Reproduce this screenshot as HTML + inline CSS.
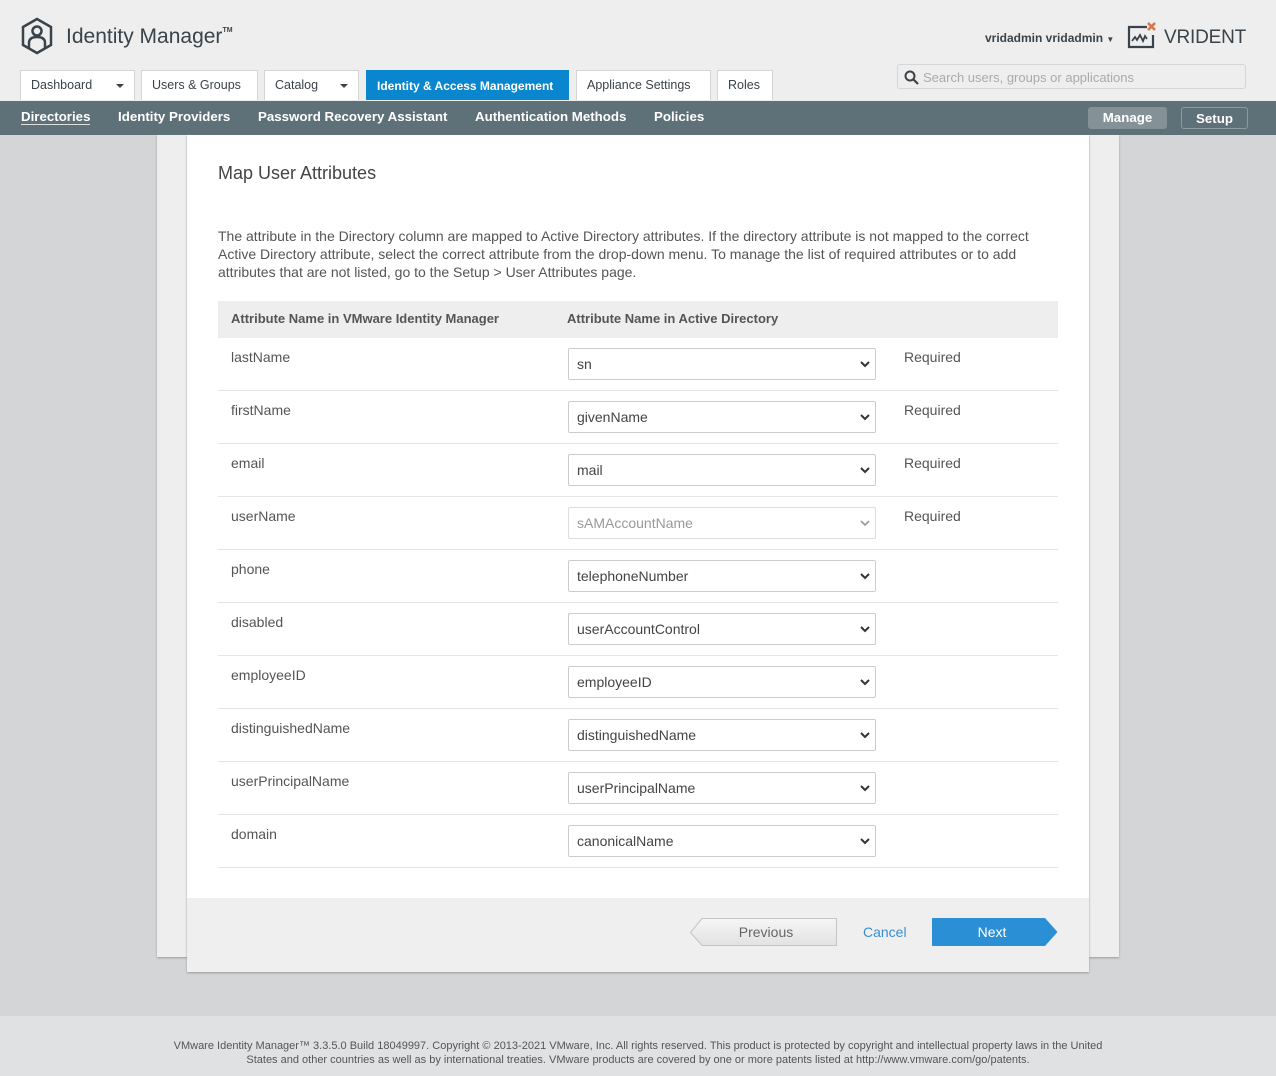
<!DOCTYPE html>
<html><head><meta charset="utf-8"><style>
*{box-sizing:border-box;margin:0;padding:0}
body{width:1276px;height:1076px;background:#d4d5d7;font-family:"Liberation Sans",Arial,sans-serif;position:relative;overflow:hidden;color:#555}
.hdr{position:absolute;left:0;top:0;width:1276px;height:101px;background:#eeeeee}
.logo{position:absolute;left:20px;top:17px}
.title{position:absolute;left:66px;top:25px;font-size:21px;color:#3a434a}
.title sup{font-size:7px;vertical-align:11px;font-weight:bold}
.user{position:absolute;left:985px;top:31px;font-size:12px;font-weight:bold;color:#3a434a}
.vr{position:absolute;left:1164px;top:27px;font-size:19px;color:#3a434a;letter-spacing:-0.2px}
.search{position:absolute;left:897px;top:64px;width:349px;height:25px;border:1px solid #d6d6d6;border-radius:3px;background:#eee}
.search span{position:absolute;left:25px;top:5px;font-size:13px;color:#aaa}
.tab{position:absolute;top:70px;height:30px;background:#fff;border:1px solid #d4d4d4;border-bottom:none;font-size:12.5px;color:#3a434a;padding:7px 0 0 10px;white-space:nowrap}
.tab.a{background:#0a86cf;color:#fff;font-weight:bold;border-color:#0a86cf;font-size:12px;padding-top:8px}
.caret{position:absolute;right:10px;top:13px;border:4px solid transparent;border-top:4px solid #3a434a;border-bottom:none}
.nav{position:absolute;left:0;top:101px;width:1276px;height:34px;background:#5e7078}
.nav a{position:absolute;top:8px;font-size:13.3px;font-weight:bold;color:#fff;text-decoration:none;white-space:nowrap}
.btn{position:absolute;top:6px;height:22px;border-radius:3px;font-size:13.3px;font-weight:bold;color:#fff;text-align:center;padding-top:3px}
.back{position:absolute;left:157px;top:135px;width:962px;height:822px;background:#eeeeee;box-shadow:0 1px 2px #999}
.card{position:absolute;left:187px;top:135px;width:902px;height:837px;background:#fff;box-shadow:0 1px 2px #999}
.card h1{position:absolute;left:31px;top:28px;font-size:18px;font-weight:normal;color:#444}
.desc{position:absolute;left:31px;top:92px;width:830px;font-size:14px;line-height:18px;color:#555}
.th{position:absolute;left:31px;top:166px;width:840px;height:37px;background:#eeeeee;font-size:13px;font-weight:bold;color:#555}
.row{position:absolute;left:31px;width:840px;height:53px;border-bottom:1px solid #e4e4e4;font-size:14px;color:#555}
.row .n{position:absolute;left:13px;top:11px}
.row .r{position:absolute;left:686px;top:11px}
.sel{position:absolute;left:350px;top:10px;width:308px;height:32px;border:1px solid #ccc;border-radius:2px;padding:7px 0 0 8px;color:#444}
.sel.d{color:#999;border-color:#ddd}
.sel svg{position:absolute;right:5px;top:12px}
.foot{position:absolute;left:0;top:763px;width:902px;height:74px;background:#efefef}
.ftr{position:absolute;left:0;top:1016px;width:1276px;height:60px;background:#e0e1e2;font-size:11px;color:#555;text-align:center;padding-top:23px;line-height:14px}
</style></head><body>
<div class="hdr">
<svg class="logo" width="34" height="38" viewBox="0 0 34 38"><path d="M17 2 L31 10 L31 28 L17 36 L3 28 L3 10 Z" fill="none" stroke="#3a434a" stroke-width="2.5"/><circle cx="17" cy="14" r="4.5" fill="none" stroke="#3a434a" stroke-width="2.5"/><path d="M9 31 L9 26 Q9 20 17 20 Q25 20 25 26 L25 31" fill="none" stroke="#3a434a" stroke-width="2.5"/></svg>
<div class="title">Identity Manager<sup>TM</sup></div>
<div class="user">vridadmin vridadmin <span style="font-size:8px">▼</span></div>
<svg style="position:absolute;left:1127px;top:22px" width="30" height="27" viewBox="0 0 30 27"><path d="M20 5 H2 V25 H26 V13" fill="none" stroke="#3a434a" stroke-width="2.2"/><path d="M5 19 L8 15 L10 18 L13 13 L16 19 L18 14 L20 17" fill="none" stroke="#3a434a" stroke-width="1.8"/><path d="M21 1 L28 8 M28 1 L21 8" stroke="#d4764a" stroke-width="2.6"/></svg>
<div class="vr">VRIDENT</div>
<div class="search"><svg style="position:absolute;left:6px;top:5px" width="15" height="15" viewBox="0 0 15 15"><circle cx="6" cy="6" r="4.5" fill="none" stroke="#3a434a" stroke-width="2"/><path d="M9.5 9.5 L14 14" stroke="#3a434a" stroke-width="2.2"/></svg><span>Search users, groups or applications</span></div>
<div class="tab" style="left:20px;width:115px">Dashboard<i class="caret"></i></div>
<div class="tab" style="left:141px;width:117px">Users &amp; Groups</div>
<div class="tab" style="left:264px;width:95px">Catalog<i class="caret"></i></div>
<div class="tab a" style="left:366px;width:203px">Identity &amp; Access Management</div>
<div class="tab" style="left:576px;width:135px">Appliance Settings</div>
<div class="tab" style="left:717px;width:56px">Roles</div>
</div>
<div class="nav">
<a style="left:21px;border-bottom:1px solid #ddd">Directories</a>
<a style="left:118px">Identity Providers</a>
<a style="left:258px">Password Recovery Assistant</a>
<a style="left:475px">Authentication Methods</a>
<a style="left:654px">Policies</a>
<div class="btn" style="left:1088px;width:79px;background:#849197">Manage</div>
<div class="btn" style="left:1181px;width:67px;border:1px solid #8d9aa0">Setup</div>
</div>
<div class="back"></div>
<div class="card">
<h1>Map User Attributes</h1>
<div class="desc">The attribute in the Directory column are mapped to Active Directory attributes. If the directory attribute is not mapped to the correct Active Directory attribute, select the correct attribute from the drop-down menu. To manage the list of required attributes or to add attributes that are not listed, go to the Setup &gt; User Attributes page.</div>
<div class="th"><span style="position:absolute;left:13px;top:10px">Attribute Name in VMware Identity Manager</span><span style="position:absolute;left:349px;top:10px">Attribute Name in Active Directory</span></div>
<div class="row" style="top:203px"><span class="n">lastName</span><div class="sel">sn<svg width="10" height="7"><path d="M1 1 L5 5 L9 1" fill="none" stroke="#333" stroke-width="2"/></svg></div><span class="r">Required</span></div>
<div class="row" style="top:256px"><span class="n">firstName</span><div class="sel">givenName<svg width="10" height="7"><path d="M1 1 L5 5 L9 1" fill="none" stroke="#333" stroke-width="2"/></svg></div><span class="r">Required</span></div>
<div class="row" style="top:309px"><span class="n">email</span><div class="sel">mail<svg width="10" height="7"><path d="M1 1 L5 5 L9 1" fill="none" stroke="#333" stroke-width="2"/></svg></div><span class="r">Required</span></div>
<div class="row" style="top:362px"><span class="n">userName</span><div class="sel d">sAMAccountName<svg width="10" height="7"><path d="M1 1 L5 5 L9 1" fill="none" stroke="#999" stroke-width="1.6"/></svg></div><span class="r">Required</span></div>
<div class="row" style="top:415px"><span class="n">phone</span><div class="sel">telephoneNumber<svg width="10" height="7"><path d="M1 1 L5 5 L9 1" fill="none" stroke="#333" stroke-width="2"/></svg></div></div>
<div class="row" style="top:468px"><span class="n">disabled</span><div class="sel">userAccountControl<svg width="10" height="7"><path d="M1 1 L5 5 L9 1" fill="none" stroke="#333" stroke-width="2"/></svg></div></div>
<div class="row" style="top:521px"><span class="n">employeeID</span><div class="sel">employeeID<svg width="10" height="7"><path d="M1 1 L5 5 L9 1" fill="none" stroke="#333" stroke-width="2"/></svg></div></div>
<div class="row" style="top:574px"><span class="n">distinguishedName</span><div class="sel">distinguishedName<svg width="10" height="7"><path d="M1 1 L5 5 L9 1" fill="none" stroke="#333" stroke-width="2"/></svg></div></div>
<div class="row" style="top:627px"><span class="n">userPrincipalName</span><div class="sel">userPrincipalName<svg width="10" height="7"><path d="M1 1 L5 5 L9 1" fill="none" stroke="#333" stroke-width="2"/></svg></div></div>
<div class="row" style="top:680px"><span class="n">domain</span><div class="sel">canonicalName<svg width="10" height="7"><path d="M1 1 L5 5 L9 1" fill="none" stroke="#333" stroke-width="2"/></svg></div></div>
<div class="foot">
<svg style="position:absolute;left:503px;top:20px" width="148" height="29" viewBox="0 0 148 29"><defs><linearGradient id="g1" x1="0" y1="0" x2="0" y2="1"><stop offset="0" stop-color="#f6f6f6"/><stop offset="1" stop-color="#e2e2e2"/></linearGradient></defs><path d="M0.5 14.5 L12 0.5 H146.5 V27.5 H12 Z" fill="url(#g1)" stroke="#c4c4c4"/><text x="76" y="19" font-family="Liberation Sans" font-size="14" fill="#666" text-anchor="middle">Previous</text></svg>
<div style="position:absolute;left:676px;top:26px;font-size:14px;color:#3a8fcf">Cancel</div>
<svg style="position:absolute;left:745px;top:20px" width="126" height="29" viewBox="0 0 126 29"><path d="M0 0 H113 L125.5 14 L113 28 H0 Z" fill="#2b8fd6"/><text x="60" y="19" font-family="Liberation Sans" font-size="14" fill="#fff" text-anchor="middle">Next</text></svg>
</div>
</div>
<div class="ftr">VMware Identity Manager™ 3.3.5.0 Build 18049997. Copyright © 2013-2021 VMware, Inc. All rights reserved. This product is protected by copyright and intellectual property laws in the United<br>States and other countries as well as by international treaties. VMware products are covered by one or more patents listed at http://www.vmware.com/go/patents.</div>
</body></html>
